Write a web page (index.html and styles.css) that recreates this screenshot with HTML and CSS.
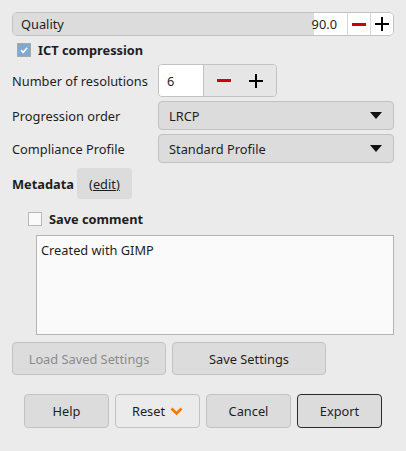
FILE: index.html
```html
<!DOCTYPE html>
<html lang="en">
<head>
    <meta charset="UTF-8">
    <meta name="viewport" content="width=device-width, initial-scale=1.0">
    <title>Export Image as JPEG 2000</title>
    <link rel="stylesheet" href="styles.css">
</head>
<body>
    <div class="dialog">
        <div class="scale">
            <div class="scale-track">
                <div class="scale-fill" style="width: 90%"></div>
                <span class="scale-label">Quality</span>
                <span class="scale-value">90.0</span>
            </div>
            <button class="scale-btn minus"><span></span></button>
            <button class="scale-btn plus"><span></span></button>
        </div>

        <label class="check-row">
            <span class="checkbox checked">
                <svg width="10" height="10" viewBox="0 0 10 10"><path d="M2 5.2 L4.2 7.3 L8.2 2.8" fill="none" stroke="#fff" stroke-width="1.6"/></svg>
            </span>
            <span class="check-label">ICT compression</span>
        </label>

        <div class="form-grid">
            <span class="field-label">Number of resolutions</span>
            <div class="spin">
                <span class="spin-entry">6</span>
                <div class="spin-btns">
                    <span class="icon minus"><span></span></span>
                    <span class="icon plus"><span></span></span>
                </div>
            </div>

            <span class="field-label">Progression order</span>
            <div class="combo">
                <span>LRCP</span>
                <span class="arrow"></span>
            </div>

            <span class="field-label">Compliance Profile</span>
            <div class="combo">
                <span>Standard Profile</span>
                <span class="arrow"></span>
            </div>
        </div>

        <div class="metadata-row">
            <span class="section-title">Metadata</span>
            <button class="edit-btn">(edit)</button>
        </div>

        <div class="comment">
            <label class="check-row">
                <span class="checkbox"></span>
                <span class="check-label">Save comment</span>
            </label>
            <div class="comment-box">Created with GIMP</div>
        </div>

        <div class="settings-row">
            <button class="btn disabled">Load Saved Settings</button>
            <button class="btn">Save Settings</button>
        </div>

        <div class="action-row">
            <button class="btn">Help</button>
            <button class="btn light">Reset
                <svg width="13" height="9" viewBox="0 0 13 9"><path d="M1.5 1.5 L6.5 6.5 L11.5 1.5" fill="none" stroke="#f57900" stroke-width="2.6"/></svg>
            </button>
            <button class="btn">Cancel</button>
            <button class="btn default">Export</button>
        </div>
    </div>
</body>
</html>
```

FILE: styles.css
```css
* {
    box-sizing: border-box;
}

body {
    margin: 0;
    background-color: #ebebeb;
    font-family: "Noto Sans", "DejaVu Sans", sans-serif;
    font-size: 12.8px;
    color: #1e1e1e;
}

.dialog {
    padding: 12px 12px 0 12px;
}

button {
    font-family: inherit;
    font-size: 12.8px;
    color: #1e1e1e;
}

/* quality scale */
.scale {
    display: flex;
    height: 24px;
    border: 1px solid #c2c2c2;
    border-radius: 5px;
    background-color: #fff;
    overflow: hidden;
}

.scale-track {
    position: relative;
    flex: 1;
    display: flex;
    align-items: center;
    justify-content: space-between;
    padding: 0 10px 0 8px;
}

.scale-fill {
    position: absolute;
    left: 0;
    top: 0;
    bottom: 0;
    background-color: #dcdcdc;
}

.scale-label,
.scale-value {
    position: relative;
}

.scale-btn {
    width: 23px;
    border: none;
    border-left: 1px solid #d6d6d6;
    background-color: #fff;
    padding: 0;
    display: flex;
    align-items: center;
    justify-content: center;
}

.scale-btn span,
.icon span {
    position: relative;
    display: block;
    width: 14px;
    height: 3px;
    background-color: #cc0000;
}

.scale-btn.plus span,
.icon.plus span {
    width: 14px;
    height: 2px;
    background-color: #000;
}

.scale-btn.plus span::after,
.icon.plus span::after {
    content: "";
    position: absolute;
    left: 6px;
    top: -6px;
    width: 2px;
    height: 14px;
    background-color: #000;
}

/* checkboxes */
.check-row {
    display: flex;
    align-items: center;
    gap: 7px;
    height: 28px;
    padding-left: 5px;
}

.checkbox {
    width: 14px;
    height: 14px;
    border: 1px solid #b8b8b8;
    background-color: #fafafa;
    display: flex;
    align-items: center;
    justify-content: center;
}

.checkbox.checked {
    background-color: #7fa9cf;
    border-color: #a8a8a8;
}

.check-label {
    font-weight: bold;
}

/* label / field grid */
.form-grid {
    display: grid;
    grid-template-columns: 146px 1fr;
    row-gap: 4px;
    align-items: center;
}

.spin {
    display: flex;
    width: 119px;
    height: 33px;
    border: 1px solid #c2c2c2;
    border-radius: 4px;
    overflow: hidden;
}

.spin-entry {
    width: 45px;
    background-color: #fff;
    display: flex;
    align-items: center;
    padding-left: 8px;
    border-right: 1px solid #c2c2c2;
}

.spin-btns {
    flex: 1;
    background-color: #e6e6e6;
    display: flex;
    align-items: center;
    justify-content: space-around;
    padding: 0 4px;
}

.combo {
    height: 29px;
    border: 1px solid #c2c2c2;
    border-radius: 4px;
    background-color: #dcdcdc;
    display: flex;
    align-items: center;
    justify-content: space-between;
    padding: 0 11px 0 10px;
}

.arrow {
    width: 0;
    height: 0;
    border-left: 6px solid transparent;
    border-right: 6px solid transparent;
    border-top: 7px solid #111;
}

/* metadata */
.metadata-row {
    display: flex;
    align-items: center;
    gap: 3px;
    margin-top: 5px;
}

.section-title {
    font-weight: bold;
}

.edit-btn {
    height: 31px;
    width: 55px;
    border: none;
    border-radius: 3px;
    background-color: #dcdcdc;
    text-decoration: underline;
    padding: 0;
}

.comment {
    padding-left: 11px;
    margin-top: 6px;
}

.comment-box {
    margin: 2px 0 0 13px;
    height: 100px;
    border: 1px solid #b4b4b4;
    background-color: #fafafa;
    padding: 5px 4px;
}

/* buttons */
.btn {
    height: 33px;
    border: 1px solid #c2c2c2;
    border-radius: 4px;
    background-color: #dcdcdc;
    padding: 0;
}

.btn.disabled {
    color: #8b8b8b;
}

.btn.light {
    background-color: #ebebeb;
    display: flex;
    align-items: center;
    justify-content: center;
    gap: 5px;
}

.btn.default {
    border-color: #2a2a2a;
}

.settings-row {
    display: flex;
    gap: 6px;
    margin-top: 7px;
}

.settings-row .btn {
    width: 154px;
}

.action-row {
    display: flex;
    gap: 6px;
    margin-top: 19px;
    padding-left: 12px;
}

.action-row .btn {
    width: 85px;
    height: 34px;
}
```
